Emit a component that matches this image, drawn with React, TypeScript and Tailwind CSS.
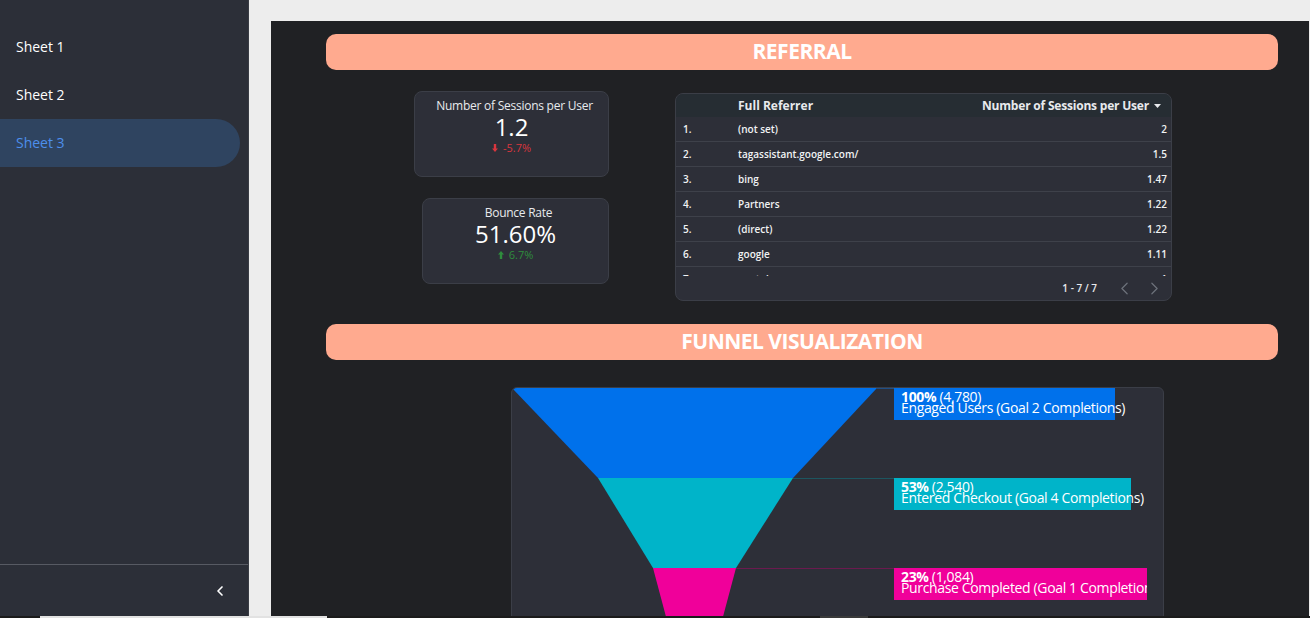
import { ChevronLeft, ChevronRight } from 'lucide-react';

const rows = [
  { n: '1.', ref: '(not set)', v: '2' },
  { n: '2.', ref: 'tagassistant.google.com/', v: '1.5' },
  { n: '3.', ref: 'bing', v: '1.47' },
  { n: '4.', ref: 'Partners', v: '1.22' },
  { n: '5.', ref: '(direct)', v: '1.22' },
  { n: '6.', ref: 'google', v: '1.11' },
  { n: '7.', ref: 'youtube.com', v: '1' },
];

function Arrow({ up, color }: { up?: boolean; color: string }) {
  return (
    <svg width="6" height="8" viewBox="0 0 6 8" className={up ? 'rotate-180' : ''}>
      <path d="M3 8 L0 4.5 H1.8 V0 H4.2 V4.5 H6 Z" fill={color} />
    </svg>
  );
}

function Banner({ title }: { title: string }) {
  return (
    <div className="ml-[55px] w-[952px] h-[36px] rounded-[10px] bg-[#ffaa8f] flex items-center justify-center">
      <span className="text-white font-bold text-[21px] tracking-[-0.5px]">{title}</span>
    </div>
  );
}

function Scorecard({ title, value, delta, up, width, valueSize }: { title: string; value: string; delta: string; up?: boolean; width: string; valueSize: string }) {
  return (
    <div className={`${width} h-[86px] rounded-lg bg-[#2d2f38] border border-[#3b3e47] flex flex-col items-center pt-[6px]`}>
      <div className="text-[12px] text-[#e8eaed] leading-[16px] tracking-[-0.25px] pl-[6px]">{title}</div>
      <div className={`${valueSize} text-white leading-[26px]`}>{value}</div>
      <div className={`flex items-center gap-[5px] text-[11px] leading-[15px] ${up ? 'text-[#2f8d3d]' : 'text-[#d9363e]'}`}>
        <Arrow up={up} color={up ? '#2f8d3d' : '#d9363e'} />
        {delta}
      </div>
    </div>
  );
}

function RefTable() {
  return (
    <div className="mt-[2px] ml-[66px] w-[497px] h-[208px] rounded-lg bg-[#2d2f38] border border-[#3b3e47] overflow-hidden flex flex-col">
      <div className="h-[23px] shrink-0 bg-[#262d33] flex items-center text-[12px] font-bold text-[#e8eaed]">
        <div className="w-[62px]" />
        <div className="flex-1">Full Referrer</div>
        <div className="flex items-center gap-[5px] pr-[10px] tracking-[-0.2px]">
          Number of Sessions per User
          <svg width="7" height="4" viewBox="0 0 7 4"><path d="M0 0 H7 L3.5 4 Z" fill="#e8eaed" /></svg>
        </div>
      </div>
      <div className="h-[159px] shrink-0 overflow-hidden">
        {rows.map((r) => (
          <div key={r.n} className="h-[25px] flex items-center border-b border-[#3e414a] text-[10px] font-semibold text-[#f1f3f4]">
            <div className="w-[62px] pl-[7px]">{r.n}</div>
            <div className="flex-1">{r.ref}</div>
            <div className="pr-[4px]">{r.v}</div>
          </div>
        ))}
      </div>
      <div className="flex-1 flex items-center justify-end pr-[6px] text-[#e8eaed]">
        <span className="text-[10px] font-semibold mr-[17px]">1 - 7 / 7</span>
        <ChevronLeft size={21} strokeWidth={1.4} className="text-[#6d727b] mr-[9px]" />
        <ChevronRight size={21} strokeWidth={1.4} className="text-[#6d727b]" />
      </div>
    </div>
  );
}

function Funnel() {
  return (
    <div className="ml-[240px] mt-[27px] w-[653px] h-[260px] rounded-md bg-[#2d2f38] border border-[#3b3e47] relative overflow-hidden">
      <svg width="653" height="260" className="absolute left-0 top-0">
        <line x1="365" y1="0.5" x2="382" y2="0.5" stroke="#1f4f86" strokeWidth="1" />
        <line x1="281" y1="90.5" x2="382" y2="90.5" stroke="#1d5660" strokeWidth="1" />
        <line x1="224" y1="180.5" x2="382" y2="180.5" stroke="#6b1a4f" strokeWidth="1" />
        <polygon points="0,0 365,0 281,90 86,90" fill="#0071eb" />
        <polygon points="86,90 281,90 224,180 141,180" fill="#00b4c9" />
        <polygon points="141,180 224,180 200,270 165,270" fill="#f0009a" />
      </svg>
      <div className="absolute left-[382px] top-0 w-[221px] h-[32px] bg-[#0071eb] pl-[7px] pt-[3px] text-white text-[14px] leading-[11px] tracking-[-0.35px] whitespace-nowrap">
        <div><b>100%</b> (4,780)</div>
        <div>Engaged Users (Goal 2 Completions)</div>
      </div>
      <div className="absolute left-[382px] top-[90px] w-[237px] h-[32px] bg-[#00b4c9] pl-[7px] pt-[3px] text-white text-[14px] leading-[11px] tracking-[-0.35px] whitespace-nowrap">
        <div><b>53%</b> (2,540)</div>
        <div>Entered Checkout (Goal 4 Completions)</div>
      </div>
      <div className="absolute left-[382px] top-[180px] w-[253px] h-[32px] bg-[#f0009a] pl-[7px] pt-[3px] text-white text-[14px] leading-[11px] tracking-[-0.35px] whitespace-nowrap overflow-hidden">
        <div><b>23%</b> (1,084)</div>
        <div>Purchase Completed (Goal 1 Completions)</div>
      </div>
    </div>
  );
}

export default function App() {
  const sheets = ['Sheet 1', 'Sheet 2', 'Sheet 3'];
  return (
    <div className="w-[1310px] h-[618px] overflow-hidden flex flex-col bg-[#ededed]" style={{ fontFamily: '"Open Sans", sans-serif' }}>
      <div className="h-[616px] flex overflow-hidden">
        <aside className="w-[249px] shrink-0 bg-[#2c2f38] border-r border-[#3a3d45] flex flex-col">
          <nav className="pt-[23px] pr-[8px] flex-1">
            {sheets.map((s, i) => (
              <div
                key={s}
                className={`h-[48px] flex items-center pl-[16px] pb-[2px] text-[14px] rounded-r-full ${i === 2 ? 'bg-[#2f4460] text-[#4d8fec]' : 'text-white'}`}
              >
                {s}
              </div>
            ))}
          </nav>
          <div className="h-[52px] border-t border-[#575a63] flex items-center justify-end pr-[20px]">
            <ChevronLeft size={16} strokeWidth={2.5} className="text-white" />
          </div>
        </aside>
        <main className="flex-1 pl-[22px] pt-[21px]">
          <div className="w-[1038px] h-[600px] bg-[#202124] pt-[13px]">
            <Banner title="REFERRAL" />
            <div className="flex mt-[21px] items-start">
              <div className="ml-[143px] w-[195px] flex flex-col items-end gap-[21px]">
                <Scorecard title="Number of Sessions per User" value="1.2" delta="-5.7%" width="w-[195px]" valueSize="text-[24px]" />
                <Scorecard title="Bounce Rate" value="51.60%" delta="6.7%" up width="w-[187px]" valueSize="text-[24px]" />
              </div>
              <RefTable />
            </div>
            <div className="mt-[23px]">
              <Banner title="FUNNEL VISUALIZATION" />
            </div>
            <Funnel />
          </div>
        </main>
      </div>
      <div className="h-[2px] bg-[#1b1b1b] relative">
        <div className="absolute left-[40px] w-[287px] h-[2px] bg-[#e2e2e2]" />
        <div className="absolute left-[820px] w-[48px] h-[2px] bg-[#3a3a3a]" />
      </div>
    </div>
  );
}
